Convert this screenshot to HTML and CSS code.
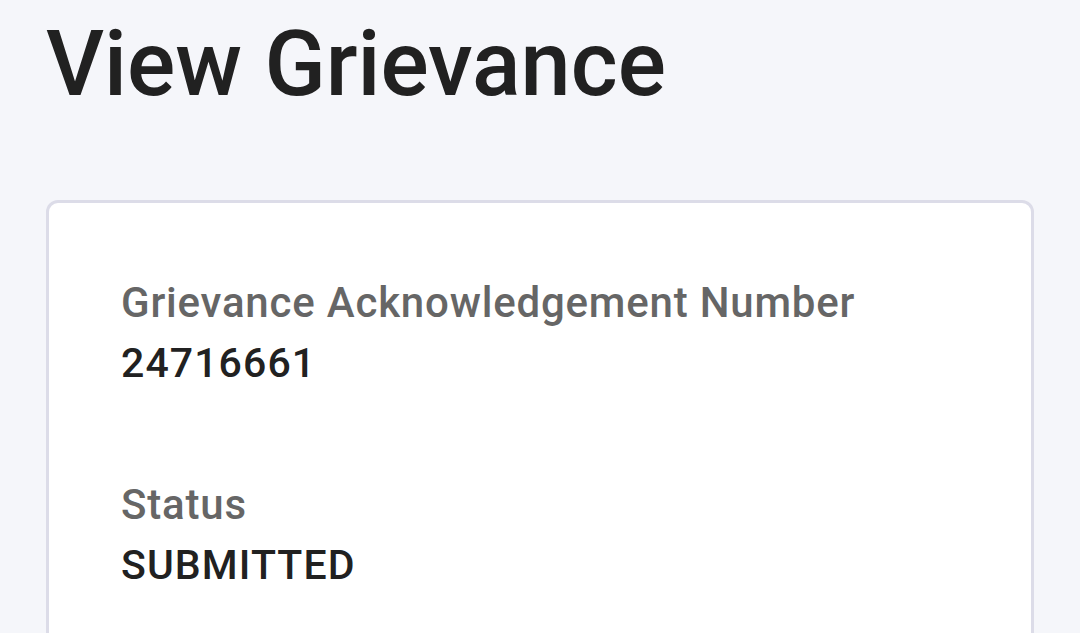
FILE: index.html
```html
<!DOCTYPE html>
<html lang="en">
<head>
    <meta charset="UTF-8">
    <meta name="viewport" content="width=device-width, initial-scale=1.0">
    <title>View Grievance</title>
    <link rel="stylesheet" href="styles.css">
</head>
<body>
    <div class="page">
        <h1>View Grievance</h1>

        <div class="card">
            <div class="field">
                <p class="label">Grievance Acknowledgement Number</p>
                <p class="value">24716661</p>
            </div>
            <div class="field">
                <p class="label">Status</p>
                <p class="value">SUBMITTED</p>
            </div>
        </div>
    </div>
</body>
</html>
```

FILE: styles.css
```css
body {
    font-family: Roboto, "Noto Sans", sans-serif;
    background-color: #f5f6fa;
    color: #212121;
    margin: 0;
}

.page {
    padding: 11px 46px 0 46px;
}

h1 {
    font-size: 90px;
    font-weight: 500;
    line-height: 1.2;
    margin: 0 0 81px 0;
    color: #212121;
}

.card {
    background: #fff;
    border: 3px solid #dcdce8;
    border-radius: 12px;
    padding: 69px 72px 40px 72px;
    min-height: 600px;
}

.field {
    margin-bottom: 80px;
}

.label {
    font-size: 42px;
    font-weight: 500;
    line-height: 61px;
    color: #666;
    margin: 0;
    letter-spacing: 0.8px;
}

.value {
    font-size: 41px;
    font-weight: 500;
    line-height: 61px;
    color: #212121;
    margin: 0;
    letter-spacing: 1.1px;
}
```
